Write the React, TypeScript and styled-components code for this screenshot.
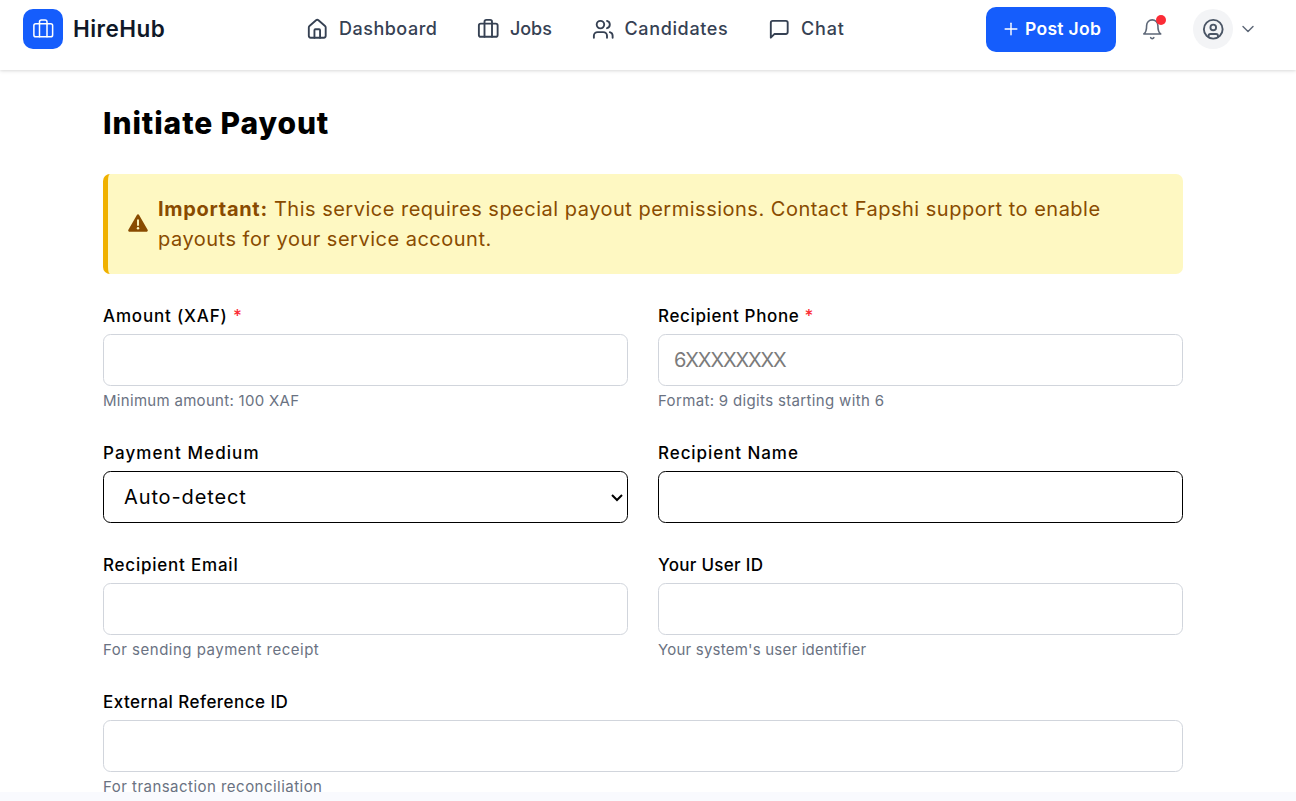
import React from "react";
import styled, { createGlobalStyle } from "styled-components";
import { House, Users, Plus, ChevronDown, CircleUser, Briefcase } from "lucide-react";

const GlobalStyle = createGlobalStyle`
  *, *::before, *::after { box-sizing: border-box; }
  html, body { margin: 0; padding: 0; overflow: hidden; background: #f9fafe; }
  body, input, select, button { font-family: Inter, sans-serif; }
`;

const Page = styled.div`
  height: 801px;
  display: flex;
  flex-direction: column;
  overflow: hidden;
`;

const Header = styled.header`
  position: relative;
  flex: none;
  height: 70px;
  padding: 6px 38px 18px 23px;
  display: grid;
  grid-template-columns: 283px 1fr auto;
  align-items: center;
  background: #fff;
  box-shadow: 0 1px 4px rgba(0, 0, 0, 0.12), 0 1px 2px rgba(0, 0, 0, 0.04);
`;

const Brand = styled.div`
  display: flex;
  align-items: center;
  gap: 10px;
`;

const LogoTile = styled.div`
  width: 40px;
  height: 40px;
  border-radius: 10px;
  display: grid;
  place-items: center;
  background: #155dfc;
  color: #fff;
`;

const BrandName = styled.span`
  padding-bottom: 2px;
  font-size: 22.5px;
  font-weight: 600;
  letter-spacing: 0.45px;
  color: #101828;
`;

const Nav = styled.nav`
  display: flex;
  gap: 40px;
`;

const NavItem = styled.a<{ $spacing?: number; $gap?: number }>`
  display: flex;
  align-items: center;
  gap: ${(p) => p.$gap ?? 10}px;
  font-size: 18px;
  font-weight: 500;
  line-height: 27px;
  letter-spacing: ${(p) => p.$spacing ?? 0}px;
  color: #364153;
  white-space: nowrap;
`;

const NavText = styled.span`
  padding-bottom: 2px;
  line-height: 25px;
`;

const Actions = styled.div`
  display: flex;
  align-items: center;
`;

const PostButton = styled.button`
  width: 130px;
  height: 45px;
  padding: 0 0 0 15px;
  border: 0;
  border-radius: 10px;
  display: flex;
  align-items: center;
  gap: 4px;
  background: #155dfc;
  color: #fff;
  font-size: 17.5px;
  font-weight: 600;
  letter-spacing: 0.3px;
  white-space: nowrap;
`;

const BellButton = styled.div`
  position: relative;
  display: flex;
  margin-left: 25px;
  color: #5d6777;
`;

const Badge = styled.span`
  position: absolute;
  top: -3px;
  right: -2px;
  width: 10px;
  height: 10px;
  border-radius: 50%;
  background: #fb2c36;
`;

const Avatar = styled.div`
  width: 40px;
  height: 40px;
  margin: 0 5px 0 29.5px;
  border-radius: 50%;
  display: grid;
  place-items: center;
  background: #f3f4f6;
  color: #4a5565;
`;

const Chevron = styled(ChevronDown)`
  color: #5d6777;
`;

const Main = styled.main`
  height: 722px;
  flex: none;
  overflow: hidden;
  padding: 31px 113px 0 103px;
  background: #fff;
`;

const Title = styled.h1`
  margin: 0 0 28px;
  font-size: 30px;
  line-height: 45px;
  font-weight: 800;
  letter-spacing: 0.9px;
  color: #000;
`;

const Notice = styled.div`
  height: 100px;
  padding: 0 20px;
  margin-bottom: 30px;
  border-left: 5px solid #f0b100;
  border-radius: 7px;
  display: flex;
  align-items: center;
  gap: 10px;
  background: #fef8c2;
  color: #894b00;
`;

const NoticeText = styled.p`
  margin: 0;
  font-size: 20px;
  line-height: 30px;
  letter-spacing: 0.5px;
  white-space: nowrap;
`;

const NoticeLead = styled.strong`
  letter-spacing: 0.7px;
`;

const Form = styled.form`
  display: grid;
  grid-template-columns: 1fr 1fr;
  gap: 30px;
`;

const FieldBox = styled.div<{ $wide?: boolean }>`
  display: flex;
  flex-direction: column;
  grid-column: ${(p) => (p.$wide ? "1 / -1" : "auto")};
`;

const Label = styled.label<{ $spacing?: number }>`
  height: 26px;
  margin-bottom: 4px;
  font-size: 17px;
  line-height: 24px;
  font-weight: 500;
  letter-spacing: ${(p) => p.$spacing ?? 0}px;
  color: #000;
`;

const Required = styled.span`
  color: #fb2c36;
`;

const Input = styled.input<{ $dark?: boolean }>`
  width: 100%;
  height: 52px;
  padding: 0 15px;
  border: 1px solid ${(p) => (p.$dark ? "#000" : "#d1d5dc")};
  border-radius: 7.5px;
  background: #fff;
  font-size: 20px;
  outline: 0;
  &::placeholder { color: #7b7b7b; letter-spacing: -1.1px; }
`;

const SelectBox = styled.div`
  position: relative;
  display: flex;
`;

const SelectArrow = styled.svg`
  position: absolute;
  right: 5px;
  top: 22px;
  pointer-events: none;
`;

const Select = styled.select`
  appearance: none;
  width: 100%;
  height: 52px;
  padding: 0 20px;
  border: 1px solid #000;
  border-radius: 7.5px;
  background: #fff;
  color: #000;
  font-size: 20px;
  letter-spacing: 0.88px;
`;

const Hint = styled.span<{ $spacing?: number }>`
  margin-top: 4px;
  font-size: 15px;
  line-height: 21px;
  letter-spacing: ${(p) => p.$spacing ?? 0}px;
  color: #6a7282;
`;

const ChatIcon = () => (
  <svg width="22.5" height="22.5" viewBox="0 0 24 24" fill="none" stroke="currentColor" strokeWidth="2" strokeLinecap="round" strokeLinejoin="round">
    <path d="M21 15a2 2 0 0 1-2 2H7l-4 4V5a2 2 0 0 1 2-2h14a2 2 0 0 1 2 2z" />
  </svg>
);

const BellIcon = () => (
  <svg width="22.5" height="22.5" viewBox="0 0 24 24" fill="none" stroke="currentColor" strokeWidth="1.7" strokeLinecap="round" strokeLinejoin="round">
    <path d="M6 8a6 6 0 0 1 12 0c0 7 3 9 3 9H3s3-2 3-9" />
    <path d="M10.3 21a1.94 1.94 0 0 0 3.4 0" />
  </svg>
);

const WarningIcon = () => (
  <svg width="20" height="20" viewBox="0 0.7 20 20">
    <path fill="currentColor" d="M8.9 1.7a1.25 1.25 0 0 1 2.2 0l8.5 14.8c.5.9-.1 1.9-1.1 1.9H1.5c-1 0-1.6-1-1.1-1.9z" />
    <path d="M10 7v4.8" stroke="#fef8c2" strokeWidth="1.9" strokeLinecap="round" />
    <circle cx="10" cy="15" r="1.2" fill="#fef8c2" />
  </svg>
);

interface FieldProps {
  label: string;
  spacing?: number;
  required?: boolean;
  hint?: string;
  hintSpacing?: number;
  wide?: boolean;
  children: React.ReactNode;
}

const Field = ({ label, spacing, required, hint, hintSpacing, wide, children }: FieldProps) => (
  <FieldBox $wide={wide}>
    <Label $spacing={spacing}>
      {label}
      {required && <Required> *</Required>}
    </Label>
    {children}
    {hint && <Hint $spacing={hintSpacing}>{hint}</Hint>}
  </FieldBox>
);

export default function App() {
  return (
    <Page>
      <GlobalStyle />
      <Header>
        <Brand>
          <LogoTile>
            <Briefcase size={22.5} strokeWidth={1.6} />
          </LogoTile>
          <BrandName>HireHub</BrandName>
        </Brand>
        <Nav>
          <NavItem $spacing={0.5} $gap={10.5}><House size={22.5} /><NavText>Dashboard</NavText></NavItem>
          <NavItem><Briefcase size={22.5} /><NavText>Jobs</NavText></NavItem>
          <NavItem $spacing={0.65}><Users size={22.5} /><NavText>Candidates</NavText></NavItem>
          <NavItem $spacing={0.85}><ChatIcon /><NavText>Chat</NavText></NavItem>
        </Nav>
        <Actions>
          <PostButton type="button"><Plus size={20} strokeWidth={1.7} /><NavText>Post Job</NavText></PostButton>
          <BellButton><BellIcon /><Badge /></BellButton>
          <Avatar><CircleUser size={22.5} /></Avatar>
          <Chevron size={20} strokeWidth={1.7} />
        </Actions>
      </Header>
      <Main>
        <Title>Initiate Payout</Title>
        <Notice>
          <WarningIcon />
          <NoticeText>
            <NoticeLead>Important:</NoticeLead> This service requires special payout permissions. Contact Fapshi support to enable
            <br />
            payouts for your service account.
          </NoticeText>
        </Notice>
        <Form>
          <Field label="Amount (XAF)" spacing={0.83} required hint="Minimum amount: 100 XAF" hintSpacing={0.3}><Input /></Field>
          <Field label="Recipient Phone" spacing={0.64} required hint="Format: 9 digits starting with 6" hintSpacing={0.34}><Input placeholder="6XXXXXXXX" /></Field>
          <Field label="Payment Medium" spacing={1.1}>
            <SelectBox>
              <Select><option>Auto-detect</option></Select>
              <SelectArrow width="12" height="10" viewBox="0 0 12 10" fill="none" stroke="#000" strokeWidth="2">
                <path d="M1 2l5 5 5-5" />
              </SelectArrow>
            </SelectBox>
          </Field>
          <Field label="Recipient Name" spacing={0.93}><Input $dark /></Field>
          <Field label="Recipient Email" spacing={0.78} hint="For sending payment receipt" hintSpacing={0.5}><Input /></Field>
          <Field label="Your User ID" spacing={0.3} hint="Your system's user identifier" hintSpacing={0.21}><Input /></Field>
          <Field label="External Reference ID" spacing={0.46} wide hint="For transaction reconciliation" hintSpacing={0.47}><Input /></Field>
        </Form>
      </Main>
    </Page>
  );
}
